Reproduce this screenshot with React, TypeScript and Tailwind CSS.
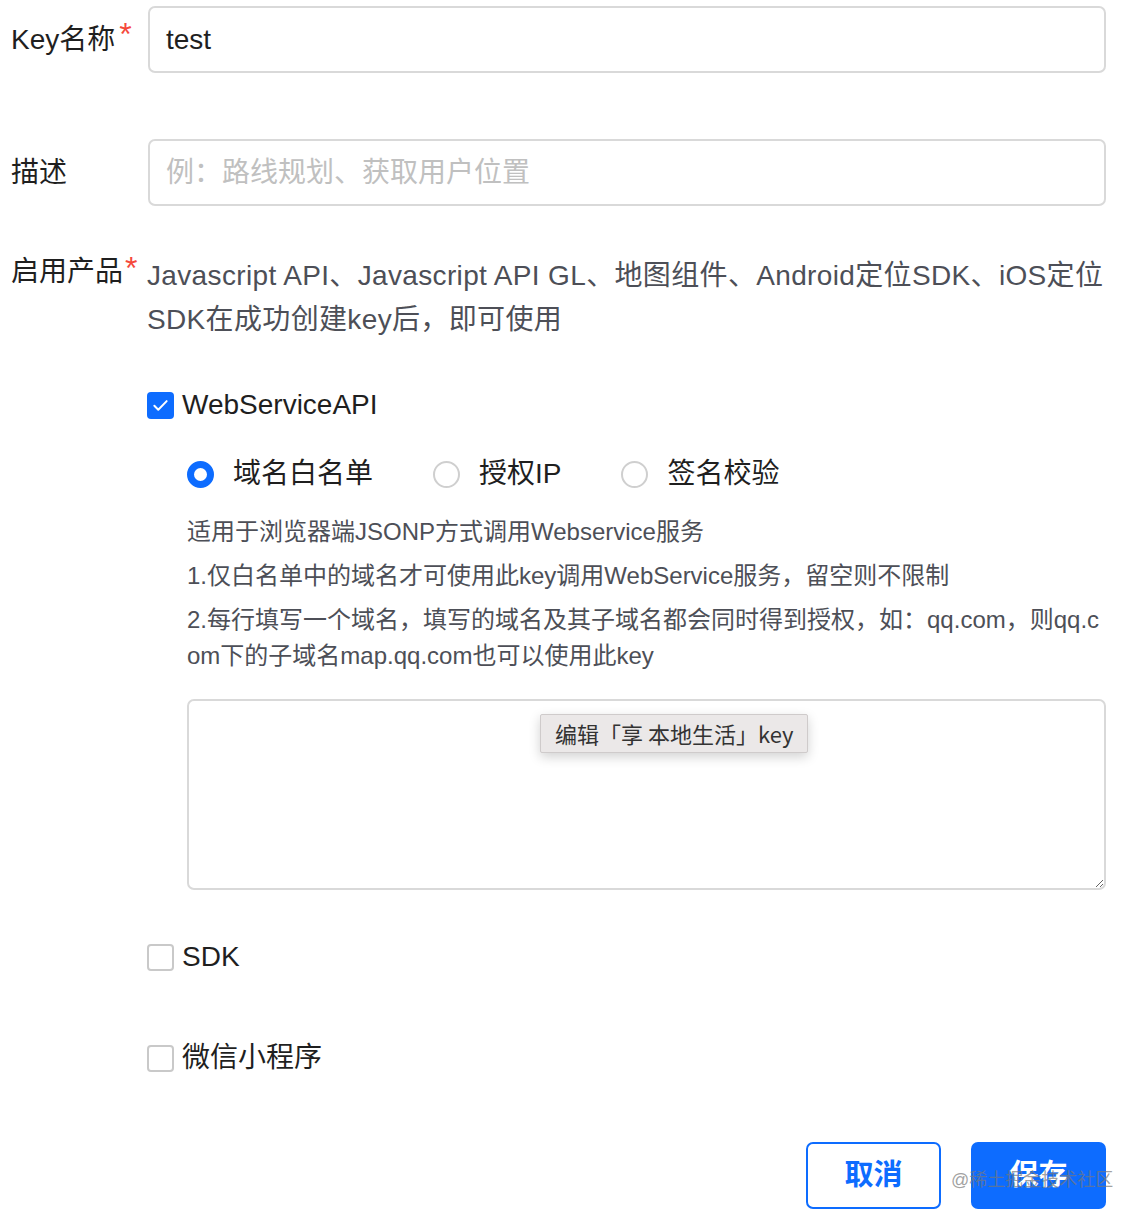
import React from "react";

const font = "font-['Liberation_Sans','Noto_Sans_CJK_SC',sans-serif]";

const Checkbox = ({ checked, label }: { checked?: boolean; label: string }) => (
  <div className="flex items-center gap-[8px]">
    {checked ? (
      <span className="flex h-[27px] w-[27px] items-center justify-center rounded-[4px] bg-[#0d6cff]">
        <svg width="21" height="21" viewBox="0 0 16 16" fill="none">
          <path d="M3.3 8.2l3 3 6.4-6.5" stroke="#fff" strokeWidth="1.5" strokeLinecap="round" strokeLinejoin="round" />
        </svg>
      </span>
    ) : (
      <span className="h-[27px] w-[27px] rounded-[4px] border-2 border-[#c9c9c9] bg-white" />
    )}
    <span className="text-[28px] leading-[36px] text-[#1f1f1f]">{label}</span>
  </div>
);

const Radio = ({ checked, label }: { checked?: boolean; label: string }) => (
  <div className="flex items-center gap-[19px]">
    {checked ? (
      <span className="h-[27px] w-[27px] rounded-full border-[7px] border-[#0d6cff] bg-white" />
    ) : (
      <span className="h-[27px] w-[27px] rounded-full border-2 border-[#cfcfcf] bg-white" />
    )}
    <span className="text-[28px] leading-[36px] text-[#1f1f1f]">{label}</span>
  </div>
);

const Star = () => <span className="ml-[4px] -mt-[12px] text-[32px] leading-[40px] text-[#f5483b]">*</span>;

export default function App() {
  return (
    <div className={`${font} relative min-h-[1222px] w-[1142px] bg-white pl-[11px] pr-[36px] pt-[6px]`}>
      {/* Key名称 */}
      <div className="flex items-center">
        <div className="flex w-[137px] shrink-0 items-center text-[28px] text-[#1f1f1f]">
          <span>Key名称</span>
          <Star />
        </div>
        <div className="flex h-[67px] flex-1 items-center rounded-[7px] border-2 border-[#d9d9d9] px-[16px] text-[28px] text-[#1f1f1f]">
          test
        </div>
      </div>

      {/* 描述 */}
      <div className="mt-[66px] flex items-center">
        <div className="w-[137px] shrink-0 text-[28px] text-[#1f1f1f]">描述</div>
        <div className="flex h-[67px] flex-1 items-center rounded-[7px] border-2 border-[#d9d9d9] px-[16px] text-[28px] text-[#c0c0c0]">
          例：路线规划、获取用户位置
        </div>
      </div>

      {/* 启用产品 */}
      <div className="mt-[48px] flex items-start">
        <div className="flex w-[136px] shrink-0 items-start text-[28px] leading-[36px] text-[#1f1f1f]">
          <span>启用产品</span>
          <span className="ml-[2px] -mt-[6px] text-[32px] leading-[40px] text-[#f5483b]">*</span>
        </div>
        <div className="flex-1">
          <p className="whitespace-nowrap text-[28px] leading-[44px] tracking-[0.35px] text-[#4d4f57]">
            Javascript API、Javascript API GL、地图组件、Android定位SDK、iOS定位
            <br />
            SDK在成功创建key后，即可使用
          </p>

          <div className="mt-[45px]">
            <Checkbox checked label="WebServiceAPI" />
          </div>

          <div className="ml-[40px] mt-[33px]">
            <div className="flex items-center gap-[60px]">
              <Radio checked label="域名白名单" />
              <Radio label="授权IP" />
              <Radio label="签名校验" />
            </div>

            <div className="mt-[22px] text-[24px] leading-[36px] text-[#4d4f57]">
              <p>适用于浏览器端JSONP方式调用Webservice服务</p>
              <p className="mt-[8px]">1.仅白名单中的域名才可使用此key调用WebService服务，留空则不限制</p>
              <p className="mt-[8px] whitespace-nowrap">
                2.每行填写一个域名，填写的域名及其子域名都会同时得到授权，如：qq.com，则qq.c
                <br />
                om下的子域名map.qq.com也可以使用此key
              </p>
            </div>

            <div className="relative mt-[25px]">
              <textarea className="block h-[191px] w-full resize rounded-[7px] border-2 border-[#d9d9d9] outline-none" />
              <div className="absolute left-[353px] top-[15px] rounded-[2px] border border-[#cfcbcb] bg-[#ebe8e8] px-[14px] py-[3px] font-['Noto_Sans_CJK_SC',sans-serif] text-[22px] leading-[31px] text-[#333] shadow-[0_4px_12px_rgba(0,0,0,0.18)]">
                编辑「享 本地生活」key
              </div>
            </div>
          </div>

          <div className="mt-[49px]">
            <Checkbox label="SDK" />
          </div>
          <div className="mt-[65px]">
            <Checkbox label="微信小程序" />
          </div>

          <div className="mt-[66px] flex justify-end gap-[30px]">
            <button className="flex h-[67px] w-[135px] items-center justify-center rounded-[7px] border-2 border-[#0d6cff] bg-white text-[29px] font-semibold text-[#0d6cff]">
              取消
            </button>
            <div className="relative">
              <button className="flex h-[67px] w-[135px] items-center justify-center rounded-[7px] bg-[#0d6cff] text-[29px] font-semibold text-white">
                保存
              </button>
              <span className="pointer-events-none absolute -left-[20px] top-[26px] whitespace-nowrap text-[18px] leading-[24px] text-[rgba(120,120,120,0.7)]">
                @稀土掘金技术社区
              </span>
            </div>
          </div>
        </div>
      </div>
    </div>
  );
}
